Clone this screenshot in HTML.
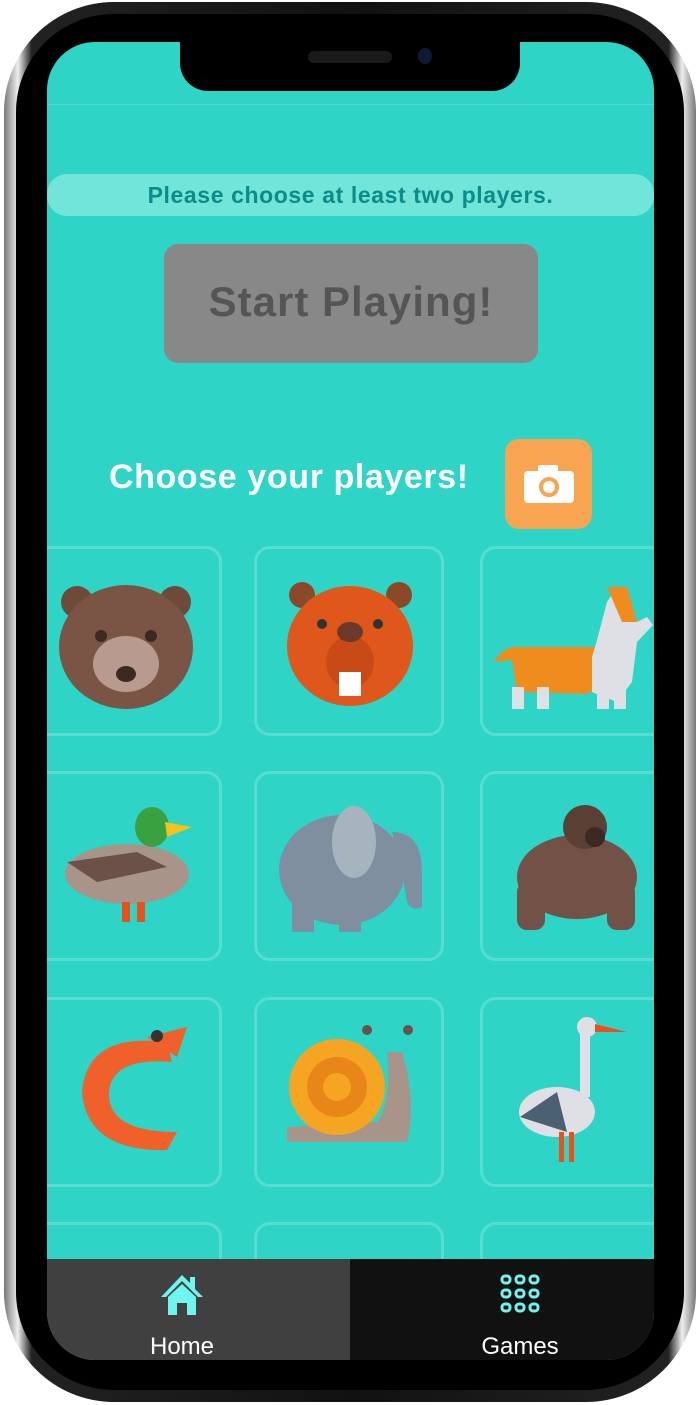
<!DOCTYPE html>
<html><head><meta charset="utf-8"><style>
html,body{margin:0;padding:0;background:#fff;width:700px;height:1405px;overflow:hidden;font-family:"Liberation Sans",sans-serif}
.phone{position:absolute;left:4px;top:2px;width:692px;height:1400px;border-radius:110px;background:linear-gradient(90deg,#777,#eee 2%,#222 4%,#111 50%,#222 96%,#eee 98%,#777);}
.bezel{position:absolute;left:12px;top:12px;right:12px;bottom:12px;border-radius:98px;background:#000}
.screen{position:absolute;left:47px;top:42px;width:607px;height:1318px;border-radius:48px;background:#2ed5c6;overflow:hidden}
.notch{position:absolute;left:133px;top:0;width:340px;height:49px;background:#000;border-radius:0 0 28px 28px}
.spk{position:absolute;left:308px;top:51px;width:84px;height:12px;border-radius:6px;background:#1a1a1a}
.cam{position:absolute;left:418px;top:48px;width:14px;height:16px;border-radius:50%;background:#0c1a33}
.msg{position:absolute;left:0;top:132px;width:607px;height:42px;border-radius:20px;background:#72e5da;color:#0d8a8a;font-weight:bold;font-size:23px;text-align:center;line-height:42px;letter-spacing:.6px}
.btn{position:absolute;left:117px;top:202px;width:374px;height:119px;border-radius:14px;background:#888;color:#555;font-weight:bold;font-size:42px;text-align:center;line-height:116px;letter-spacing:1px}
.choose{position:absolute;left:62px;top:416px;color:#fff;font-weight:bold;font-size:34px;letter-spacing:.6px}
.camb{position:absolute;left:458px;top:397px;width:87px;height:90px;border-radius:14px;background:#f8a451}
.card{position:absolute;width:190px;height:190px;border:3px solid rgba(255,255,255,.2);border-radius:16px;box-sizing:border-box}
.nav{position:absolute;left:0;top:1217px;width:607px;height:101px}
.nl{position:absolute;left:0;top:0;width:303px;height:101px;background:#404040}
.nr{position:absolute;left:303px;top:0;width:304px;height:101px;background:#111}
.lbl{position:absolute;top:74px;width:120px;text-align:center;color:#fff;font-size:24px}
</style></head><body>
<div class="phone"><div class="bezel"></div></div>
<div class="screen">
<div style="position:absolute;left:0;top:62px;width:607px;height:1px;background:rgba(255,255,255,.15)"></div>
<div class="notch"></div>
<div class="msg">Please choose at least two players.</div>
<div class="btn">Start Playing!</div>
<div class="choose">Choose your players!</div>
<div class="camb"><svg width="87" height="90" viewBox="0 0 87 90"><rect x="19" y="32" width="50" height="32" rx="4" fill="#fff"/><rect x="33" y="26" width="20" height="8" rx="2" fill="#fff"/><circle cx="44" cy="48" r="10" fill="#f8a451"/><circle cx="44" cy="48" r="6" fill="#fff"/></svg></div>

<div class="card" style="left:-15px;top:504px"></div>
<div class="card" style="left:207px;top:504px"></div>
<div class="card" style="left:433px;top:504px"></div>
<div class="card" style="left:-15px;top:729px"></div>
<div class="card" style="left:207px;top:729px"></div>
<div class="card" style="left:433px;top:729px"></div>
<div class="card" style="left:-15px;top:955px"></div>
<div class="card" style="left:207px;top:955px"></div>
<div class="card" style="left:433px;top:955px"></div>
<div class="card" style="left:-15px;top:1180px"></div>
<div class="card" style="left:207px;top:1180px"></div>
<div class="card" style="left:433px;top:1180px"></div>

<svg style="position:absolute;left:0;top:0" width="607" height="1318">
<!-- bear -->
<circle cx="30" cy="560" r="16" fill="#6e4a3b"/><circle cx="128" cy="560" r="16" fill="#6e4a3b"/>
<ellipse cx="79" cy="605" rx="67" ry="62" fill="#7a5545"/>
<ellipse cx="79" cy="622" rx="33" ry="28" fill="#b89a8e"/><circle cx="54" cy="594" r="6" fill="#3c2a22"/><circle cx="104" cy="594" r="6" fill="#3c2a22"/><ellipse cx="79" cy="632" rx="10" ry="8" fill="#3c2a22"/>
<!-- beaver -->
<circle cx="255" cy="553" r="13" fill="#8a4a2a"/><circle cx="352" cy="553" r="13" fill="#8a4a2a"/>
<ellipse cx="303" cy="604" rx="63" ry="60" fill="#e0571c"/><ellipse cx="303" cy="620" rx="24" ry="26" fill="#c84a16"/><ellipse cx="303" cy="590" rx="13" ry="10" fill="#6b3a2a"/><rect x="292" y="630" width="22" height="24" fill="#fff"/><circle cx="275" cy="582" r="5" fill="#333"/><circle cx="331" cy="582" r="5" fill="#333"/>
<!-- corgi -->
<path d="M470 605 Q455 605 447 620 L465 618 L470 650 L540 652 L560 640 L560 605Z" fill="#f08c1e"/>
<path d="M545 615 L550 598 L560 560 L570 545 L590 580 L600 575 L606 583 L590 600 L585 640 L570 660 L545 650Z" fill="#dfe0e6"/>
<path d="M560 545 L575 580 L590 580 L580 545Z" fill="#f08c1e"/>
<rect x="465" y="645" width="12" height="22" fill="#dfe0e6"/><rect x="490" y="645" width="12" height="22" fill="#dfe0e6"/><rect x="550" y="645" width="12" height="22" fill="#dfe0e6"/><rect x="567" y="645" width="12" height="22" fill="#dfe0e6"/>
<!-- duck -->
<ellipse cx="80" cy="832" rx="62" ry="30" fill="#a89489"/><ellipse cx="105" cy="785" rx="17" ry="20" fill="#3aa140"/><path d="M118 780 L145 785 L120 795Z" fill="#f4c21a"/><path d="M20 820 L90 810 L120 825 L50 840Z" fill="#6b5148"/><rect x="75" y="860" width="8" height="20" fill="#e8511c"/><rect x="90" y="860" width="8" height="20" fill="#e8511c"/>
<!-- elephant -->
<ellipse cx="295" cy="828" rx="63" ry="55" fill="#7f8fa0"/><ellipse cx="307" cy="800" rx="22" ry="36" fill="#a6b4c0"/><path d="M345 790 Q375 790 375 830 L375 865 Q365 870 360 860 L355 830Z" fill="#7f8fa0"/><rect x="245" y="860" width="22" height="30" fill="#7f8fa0"/><rect x="292" y="860" width="22" height="30" fill="#7f8fa0"/>
<!-- gorilla -->
<ellipse cx="530" cy="835" rx="60" ry="42" fill="#725246"/><circle cx="538" cy="785" r="22" fill="#5a3f35"/><ellipse cx="548" cy="795" rx="10" ry="10" fill="#3c2a22"/><rect x="470" y="840" width="28" height="48" rx="10" fill="#725246"/><rect x="560" y="840" width="28" height="48" rx="10" fill="#725246"/>
<!-- shrimp -->
<path d="M120 1000 Q40 990 35 1050 Q40 1110 120 1108 L130 1090 Q60 1090 62 1050 Q65 1015 125 1020Z" fill="#f0602a"/><path d="M100 995 L140 985 L130 1015Z" fill="#f0602a"/><circle cx="110" cy="994" r="6" fill="#333"/>
<!-- snail -->
<path d="M240 1100 L360 1100 Q370 1060 355 1010 L340 1010 Q345 1060 330 1080 L240 1085Z" fill="#a89489"/><circle cx="290" cy="1045" r="48" fill="#f6a523"/><circle cx="290" cy="1045" r="30" fill="#e8861a"/><circle cx="290" cy="1045" r="14" fill="#f6a523"/><circle cx="320" cy="988" r="5" fill="#6b5148"/><circle cx="361" cy="988" r="5" fill="#6b5148"/>
<!-- stork -->
<ellipse cx="510" cy="1070" rx="38" ry="25" fill="#dfe0e6"/><path d="M473 1075 L510 1050 L520 1090Z" fill="#4a6073"/><rect x="533" y="985" width="10" height="70" fill="#dfe0e6"/><circle cx="540" cy="985" r="10" fill="#dfe0e6"/><path d="M548 982 L580 990 L548 990Z" fill="#e8511c"/><rect x="512" y="1090" width="5" height="30" fill="#e8511c"/><rect x="522" y="1090" width="5" height="30" fill="#e8511c"/>
</svg>

<div class="nav"><div class="nl"><svg style="position:absolute;left:111px;top:12px" width="48" height="48" viewBox="0 0 48 48"><path d="M24 4 L3 26 L8 26 L24 10 L40 26 L45 26 L37 18 L37 6 L32 6 L32 12Z" fill="#6ff5ee"/><path d="M10 26 L24 13 L38 26 L38 44 L29 44 L29 32 L19 32 L19 44 L10 44Z" fill="#6ff5ee"/></svg><div class="lbl" style="left:75px">Home</div></div>
<div class="nr"><svg style="position:absolute;left:149px;top:14px" width="42" height="42" viewBox="0 0 42 42" fill="none" stroke="#6ff5ee" stroke-width="3"><rect x="3" y="3" width="8" height="7" rx="3"/><rect x="17" y="3" width="8" height="7" rx="3"/><rect x="31" y="3" width="8" height="7" rx="3"/><rect x="3" y="17" width="8" height="7" rx="3"/><rect x="17" y="17" width="8" height="7" rx="3"/><rect x="31" y="17" width="8" height="7" rx="3"/><rect x="3" y="31" width="8" height="7" rx="3"/><rect x="17" y="31" width="8" height="7" rx="3"/><rect x="31" y="31" width="8" height="7" rx="3"/></svg><div class="lbl" style="left:110px">Games</div></div></div>
</div>
<div class="spk"></div><div class="cam"></div>
</body></html>
